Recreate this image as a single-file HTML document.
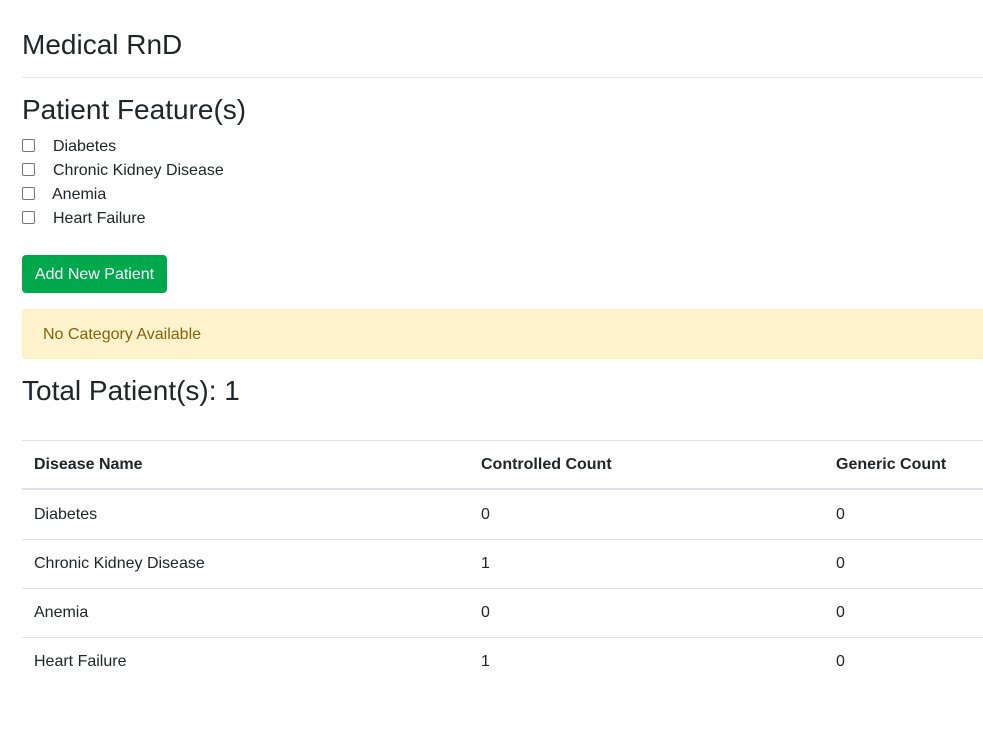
<!DOCTYPE html>
<html><head><style>
body{margin:0;font-family:"Liberation Sans",sans-serif;color:#212529;background:#fff;width:983px;height:738px;overflow:hidden;position:relative}
.a{position:absolute;white-space:nowrap}
.cb{position:absolute;left:22px;width:11px;height:11px;border:1px solid #767676;border-radius:2px;background:#fff}
.lb{position:absolute;left:53px;font-size:16px;line-height:20px}
.line{position:absolute;left:22px;width:961px;height:1px;background:#dee2e6}
.t{position:absolute;font-size:16px;line-height:20px}
</style></head><body>
<div class="a" style="left:22px;top:28px;font-size:28px;line-height:34px">Medical RnD</div>
<div class="line" style="top:77px;background:#e5e5e5"></div>
<div class="a" style="left:22px;top:93px;font-size:28px;line-height:34px">Patient Feature(s)</div>
<div class="cb" style="top:139px"></div><div class="lb" style="top:137px">Diabetes</div>
<div class="cb" style="top:163px"></div><div class="lb" style="top:161px">Chronic Kidney Disease</div>
<div class="cb" style="top:187px"></div><div class="lb" style="top:185px;left:52px">Anemia</div>
<div class="cb" style="top:211px"></div><div class="lb" style="top:209px">Heart Failure</div>
<div class="a" style="left:22px;top:255px;width:145px;height:38px;background:#00a84c;border-radius:4px;color:#fff;font-size:16px;line-height:38px;text-align:center;padding-top:1px;box-sizing:border-box">Add New Patient</div>
<div class="a" style="left:22px;top:309px;width:961px;background:#fff3cd;border:1px solid #ffeeba;border-right:none;border-radius:4px 0 0 4px;color:#856404;font-size:16px;line-height:50px;box-sizing:border-box;height:50px;padding-left:20px">No Category Available</div>
<div class="a" style="left:22px;top:374px;font-size:28px;line-height:34px">Total Patient(s): 1</div>
<div class="line" style="top:440px"></div>
<div class="t" style="left:34px;top:455px;font-weight:bold">Disease Name</div>
<div class="t" style="left:481px;top:455px;font-weight:bold">Controlled Count</div>
<div class="t" style="left:836px;top:455px;font-weight:bold">Generic Count</div>
<div class="line" style="top:488px;height:2px"></div>
<div class="t" style="left:34px;top:505px">Diabetes</div><div class="t" style="left:481px;top:505px">0</div><div class="t" style="left:836px;top:505px">0</div>
<div class="line" style="top:539px"></div>
<div class="t" style="left:34px;top:554px">Chronic Kidney Disease</div><div class="t" style="left:481px;top:554px">1</div><div class="t" style="left:836px;top:554px">0</div>
<div class="line" style="top:588px"></div>
<div class="t" style="left:34px;top:603px">Anemia</div><div class="t" style="left:481px;top:603px">0</div><div class="t" style="left:836px;top:603px">0</div>
<div class="line" style="top:637px"></div>
<div class="t" style="left:34px;top:652px">Heart Failure</div><div class="t" style="left:481px;top:652px">1</div><div class="t" style="left:836px;top:652px">0</div>
</body></html>
